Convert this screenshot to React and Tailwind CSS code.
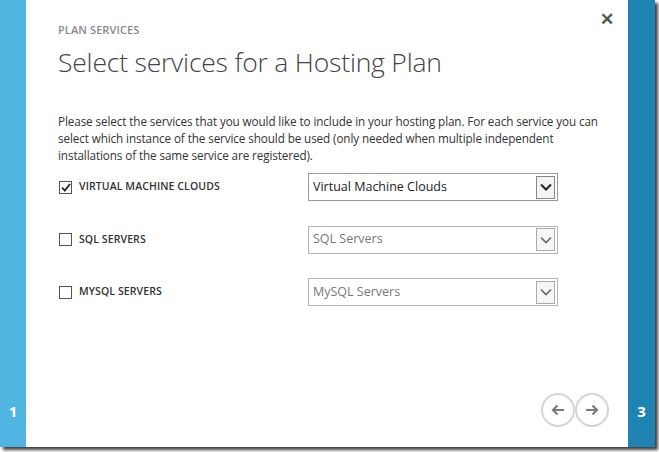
import { useState } from "react";

const services = [
  { key: "vmc", label: "VIRTUAL MACHINE CLOUDS", value: "Virtual Machine Clouds", enabled: true },
  { key: "sql", label: "SQL SERVERS", value: "SQL Servers", enabled: false },
  { key: "mysql", label: "MYSQL SERVERS", value: "MySQL Servers", enabled: false },
];

function Chevron({ dark }) {
  return (
    <svg width="12" height="8" viewBox="0 0 12 8">
      <path
        d="M1 1.5 L6 6.5 L11 1.5"
        fill="none"
        stroke={dark ? "#222" : "#666"}
        strokeWidth={dark ? 2 : 1.6}
      />
    </svg>
  );
}

function Arrow({ dir }) {
  return (
    <svg width="14" height="12" viewBox="0 0 14 12">
      {dir === "left" ? (
        <path d="M13 6 H2 M6.5 1.5 L2 6 L6.5 10.5" fill="none" stroke="#7a7a7a" strokeWidth="2.2" />
      ) : (
        <path d="M1 6 H12 M7.5 1.5 L12 6 L7.5 10.5" fill="none" stroke="#7a7a7a" strokeWidth="2.2" />
      )}
    </svg>
  );
}

export default function App() {
  const [checked, setChecked] = useState({ vmc: true, sql: false, mysql: false });

  return (
    <div className="w-[659px] h-[452px] bg-white font-['Open_Sans',sans-serif]">
      <div className="flex w-[655px] h-[447px] shadow-[3px_3px_3px_rgba(0,0,0,0.75)]">
        {/* left step */}
        <div className="w-[26px] bg-[#51b5e2] flex flex-col justify-end pb-[28px] items-center">
          <span className="text-white text-[15px] font-bold leading-none">1</span>
        </div>

        {/* dialog body */}
        <div className="flex-1 bg-white flex flex-col relative">
          <button className="absolute right-[14px] top-[10px] text-[#555] text-[17px] font-bold leading-none">
            ✕
          </button>

          <div className="pl-[32px] pr-[30px] pt-[22px]">
            <div className="text-[11px] font-semibold text-[#8a8a8a] tracking-[0.1px] leading-[16px]">
              PLAN SERVICES
            </div>
            <h1 className="mt-[8px] text-[26.5px] font-light text-[#444] leading-[32px] tracking-[-0.2px]">
              Select services for a Hosting Plan
            </h1>

            <p className="mt-[35px] text-[11.7px] text-[#333] leading-[17px] tracking-[-0.1px]">
              Please select the services that you would like to include in your hosting plan. For each service you can
              select which instance of the service should be used (only needed when multiple independent
              installations of the same service are registered).
            </p>

            <div className="mt-[9px] flex flex-col gap-[24.5px]">
              {services.map((s) => (
                <div key={s.key} className="flex items-center h-[28px]">
                  <label className="w-[250px] flex items-center gap-[7px] pl-[1px] cursor-pointer">
                    <span
                      onClick={() => setChecked({ ...checked, [s.key]: !checked[s.key] })}
                      className="w-[13px] h-[13px] border border-[#555] bg-white flex items-center justify-center"
                    >
                      {checked[s.key] && (
                        <svg width="10" height="9" viewBox="0 0 10 9">
                          <path d="M1 4.5 L3.8 7.5 L9 1" fill="none" stroke="#222" strokeWidth="1.8" />
                        </svg>
                      )}
                    </span>
                    <span className="text-[10.5px] font-semibold text-[#333] tracking-[0.1px]">{s.label}</span>
                  </label>
                  <div
                    className={`w-[250px] h-[28px] border ${
                      s.enabled ? "border-[#9a9a9a]" : "border-[#b5b5b5]"
                    } flex items-center justify-between pl-[4px] pr-[2px]`}
                  >
                    <span className={`text-[12.5px] ${s.enabled ? "text-[#222]" : "text-[#777]"}`}>{s.value}</span>
                    <span
                      className={`w-[19px] h-[23px] border ${
                        s.enabled ? "border-[#888] bg-[#f4f4f4]" : "border-[#aaa] bg-[#f6f6f6]"
                      } flex items-center justify-center`}
                    >
                      <Chevron dark={s.enabled} />
                    </span>
                  </div>
                </div>
              ))}
            </div>
          </div>

          <div className="mt-auto flex justify-end pr-[19px] pb-[20px]">
            <button className="w-[34px] h-[34px] rounded-full border-2 border-[#d6d6d6] flex items-center justify-center">
              <Arrow dir="left" />
            </button>
            <button className="w-[34px] h-[34px] rounded-full border-2 border-[#d6d6d6] flex items-center justify-center">
              <Arrow dir="right" />
            </button>
          </div>
        </div>

        {/* right step */}
        <div className="w-[27px] bg-[#1f84b1] flex flex-col justify-end pb-[28px] items-center">
          <span className="text-white text-[15px] font-bold leading-none">3</span>
        </div>
      </div>
    </div>
  );
}
